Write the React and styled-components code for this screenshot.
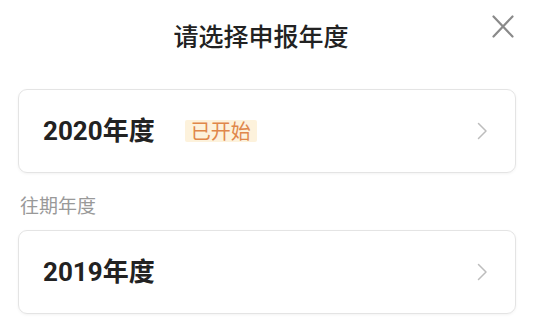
import React from "react";
import styled, { createGlobalStyle } from "styled-components";

const Global = createGlobalStyle`
  html, body { margin: 0; padding: 0; background: #fff; }
  body { font-family: "Noto Sans CJK SC", "Noto Sans", sans-serif; }
`;

const Page = styled.div`
  width: 533px;
  height: 320px;
  box-sizing: border-box;
  padding: 0 17px 0 18px;
  display: flex;
  flex-direction: column;
  overflow: hidden;
`;

const Header = styled.div`
  height: 70px;
  display: grid;
  grid-template-columns: 1fr auto 1fr;
  align-items: center;
`;

const Title = styled.h1`
  grid-column: 2;
  margin: 0 12px 0 0;
  font-size: 25px;
  font-weight: 500;
  line-height: 34px;
  color: #222;
`;

const Close = styled.button`
  grid-column: 3;
  justify-self: end;
  align-self: start;
  margin: 15px 2px 0 0;
  padding: 0;
  border: 0;
  background: none;
  width: 22px;
  height: 23px;
  display: flex;
`;

const Card = styled.div`
  margin-top: ${(p) => p.$top}px;
  height: 84px;
  box-sizing: border-box;
  border: 1px solid #e4e4e4;
  border-radius: 9px;
  box-shadow: 0 1px 3px rgba(0, 0, 0, 0.05);
  display: flex;
  align-items: center;
  padding: 0 27px 0 24px;
`;

const Year = styled.span`
  font-family: Roboto, "Noto Sans CJK SC", sans-serif;
  font-size: 26px;
  font-weight: 700;
  color: #222;
  line-height: 1;
`;

const Badge = styled.span`
  margin-left: 30px;
  padding: 0 6px;
  background: #fdf2dc;
  color: #e0874a;
  font-size: 20px;
  line-height: 22px;
  border-radius: 2px;
`;

const Spacer = styled.span`
  flex: 1;
`;

const Label = styled.div`
  margin-top: 20px;
  padding-left: 2px;
  font-size: 19px;
  line-height: 24px;
  color: #999;
`;

const Chevron = () => (
  <svg width="11" height="18" viewBox="0 0 11 18" fill="none">
    <path d="M1.5 1.5 L9 9 L1.5 16.5" stroke="#bdbdbd" strokeWidth="1.5" strokeLinecap="round" strokeLinejoin="round" />
  </svg>
);

const XIcon = () => (
  <svg width="22" height="23" viewBox="0 0 22 23" fill="none">
    <path d="M1.5 1.5 L20.5 21.5 M20.5 1.5 L1.5 21.5" stroke="#8a8a8a" strokeWidth="2.2" strokeLinecap="round" />
  </svg>
);

export default function App() {
  return (
    <>
      <Global />
      <Page>
        <Header>
          <Title>请选择申报年度</Title>
          <Close aria-label="关闭">
            <XIcon />
          </Close>
        </Header>
        <Card $top={19}>
          <Year>2020年度</Year>
          <Badge>已开始</Badge>
          <Spacer />
          <Chevron />
        </Card>
        <Label>往期年度</Label>
        <Card $top={13}>
          <Year>2019年度</Year>
          <Spacer />
          <Chevron />
        </Card>
      </Page>
    </>
  );
}
